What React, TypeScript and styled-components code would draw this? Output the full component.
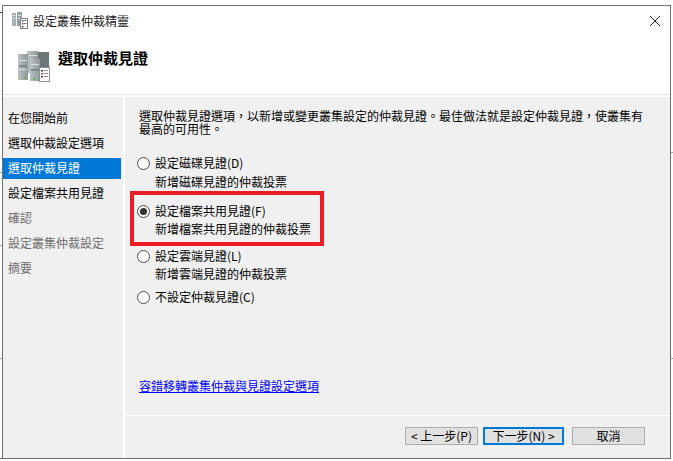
import React from "react";
import styled, { createGlobalStyle } from "styled-components";

const GlobalStyle = createGlobalStyle`
  html, body {
    margin: 0;
    padding: 0;
    background: #fff;
  }
  body {
    font-family: "Noto Sans CJK TC", "Noto Sans CJK SC", "Liberation Sans", sans-serif;
    font-size: 12px;
    color: #000;
    overflow: hidden;
  }
`;

const Page = styled.div`
  position: relative;
  width: 673px;
  height: 461px;
  padding: 5px 2px 0 2px;
  box-sizing: border-box;
`;

// bits of the desktop behind the dialog that show at the screenshot's edges
const EdgeTick = styled.i<{ $side: "left" | "right"; $y: number; $color?: string }>`
  position: absolute;
  ${(p) => p.$side}: 0;
  top: ${(p) => p.$y}px;
  width: 2px;
  height: 1px;
  background: ${(p) => p.$color || "#a0a0a0"};
`;

const Window = styled.div`
  width: 669px;
  height: 454px;
  box-sizing: border-box;
  border: 1px solid #707070;
  background: #fff;
  display: flex;
  flex-direction: column;
`;

const Header = styled.header`
  height: 88px;
  flex: none;
  border-bottom: 1px solid #e6e6e6;
  margin-bottom: 2px;
  box-sizing: content-box;
  display: flex;
  flex-direction: column;
`;

const TitleBar = styled.div`
  display: flex;
  align-items: center;
  height: 30px;
  padding: 0 9px 0 9px;
  gap: 5px;
`;

const TitleText = styled.span`
  flex: 1;
  font-size: 12px;
  line-height: 16px;
  color: #1a1a1a;
`;

const CloseButton = styled.button`
  width: 12px;
  height: 12px;
  padding: 0;
  border: 0;
  background: none;
  display: flex;
`;

const Banner = styled.div`
  display: flex;
  padding: 15px 0 0 14px;
  gap: 8px;
`;

const Heading = styled.h1`
  margin: -2px 0 0;
  font-size: 15px;
  line-height: 18px;
  font-weight: 700;
`;

const Body = styled.div`
  flex: 1;
  display: flex;
  min-height: 0;
  gap: 2px;
`;

const Sidebar = styled.nav`
  width: 120px;
  flex: none;
  background: #f0f0f0;
  box-sizing: border-box;
  padding: 11px 2px 0 0;
  display: flex;
  flex-direction: column;
  gap: 4px;
`;

const Step = styled.div<{ $state: "done" | "active" | "todo" }>`
  height: 21px;
  line-height: 20px;
  padding-left: 5px;
  white-space: nowrap;
  color: ${(p) => (p.$state === "active" ? "#fff" : p.$state === "todo" ? "#6d6d6d" : "#000")};
  background: ${(p) => (p.$state === "active" ? "#0078d7" : "transparent")};
`;

const Panel = styled.div`
  flex: 1;
  display: flex;
  flex-direction: column;
  min-width: 0;
  background: #f0f0f0;
`;

const Main = styled.main`
  position: relative;
  height: 318px;
  flex: none;
  box-sizing: border-box;
  padding: 12px 0 22px 14px;
  display: flex;
  flex-direction: column;
`;

const Intro = styled.p`
  margin: 0 0 19px;
  font-size: 12px;
  line-height: 13px;
  white-space: nowrap;
`;

const Option = styled.div<{ $top: number }>`
  margin-top: ${(p) => p.$top}px;
  margin-left: -2px;
`;

const OptionLabel = styled.label`
  display: flex;
  align-items: center;
  gap: 5px;
  height: 18px;
  line-height: 18px;
`;

const Radio = styled.span<{ $checked?: boolean }>`
  width: 13px;
  height: 13px;
  box-sizing: border-box;
  border: 1px solid #4a4a4a;
  border-radius: 50%;
  background: #fff;
  flex: none;
  display: flex;
  align-items: center;
  justify-content: center;
  &::after {
    content: "";
    width: 7px;
    height: 7px;
    border-radius: 50%;
    background: ${(p) => (p.$checked ? "#333" : "transparent")};
  }
`;

const OptionNote = styled.div<{ $top: number }>`
  margin: ${(p) => p.$top}px 0 0 18px;
  height: 18px;
  line-height: 18px;
  white-space: nowrap;
`;

const Highlight = styled.div`
  position: absolute;
  left: 5px;
  top: 94px;
  width: 194px;
  height: 55px;
  box-sizing: border-box;
  border: 4px solid #ed1c24;
  pointer-events: none;
`;

const HelpLink = styled.a`
  margin-top: auto;
  line-height: 14px;
  color: #0000ff;
  text-decoration: underline;
  white-space: nowrap;
`;

const Footer = styled.footer`
  flex: 1;
  border-top: 1px solid #fff;
  display: flex;
  justify-content: flex-end;
  padding: 11px 25px 0 0;
`;

const Button = styled.button<{ $primary?: boolean; $width: number; $left: number }>`
  width: ${(p) => p.$width}px;
  height: 18px;
  margin-left: ${(p) => p.$left}px;
  box-sizing: border-box;
  padding: 0;
  font-family: inherit;
  font-size: 12px;
  line-height: 14px;
  color: #000;
  background: #e1e1e1;
  border: ${(p) => (p.$primary ? "2px solid #0078d7" : "1px solid #adadad")};
`;

const steps: { label: string; state: "done" | "active" | "todo" }[] = [
  { label: "在您開始前", state: "done" },
  { label: "選取仲裁設定選項", state: "done" },
  { label: "選取仲裁見證", state: "active" },
  { label: "設定檔案共用見證", state: "done" },
  { label: "確認", state: "todo" },
  { label: "設定叢集仲裁設定", state: "todo" },
  { label: "摘要", state: "todo" },
];

const options = [
  { label: "設定磁碟見證(D)", note: "新增磁碟見證的仲裁投票", top: 0, noteTop: 1 },
  { label: "設定檔案共用見證(F)", note: "新增檔案共用見證的仲裁投票", top: 11, checked: true },
  { label: "設定雲端見證(L)", note: "新增雲端見證的仲裁投票", top: 9 },
  { label: "不設定仲裁見證(C)", top: 5 },
];

const SmallClusterIcon = () => (
  <svg width="16" height="18" viewBox="0 0 16 18">
    <rect x="0" y="1" width="4" height="13" fill="#a9b0b2" />
    <rect x="5" y="0" width="5" height="14" fill="#98a0a2" />
    <rect x="1" y="3" width="2" height="1" fill="#e6e9ea" />
    <rect x="1" y="6" width="2" height="1" fill="#e6e9ea" />
    <rect x="6" y="3" width="3" height="1" fill="#e6e9ea" />
    <rect x="6" y="6" width="3" height="1" fill="#e6e9ea" />
    <rect x="8.5" y="6.5" width="7" height="10" fill="#fff" stroke="#7d8486" />
    <rect x="10" y="8" width="1.5" height="1.5" fill="#444" />
    <rect x="12" y="8" width="2.5" height="1" fill="#777" />
    <rect x="10" y="11" width="1.5" height="1.5" fill="#c0392b" />
    <rect x="12" y="11" width="2.5" height="1" fill="#777" />
    <rect x="10" y="14" width="1.5" height="1.5" fill="#444" />
  </svg>
);

const ClusterIcon = () => (
  <svg width="33" height="31" viewBox="0 0 33 31">
    <defs>
      <linearGradient id="srv" x1="0" x2="1" y1="0" y2="0">
        <stop offset="0" stopColor="#bcc3c4" />
        <stop offset="1" stopColor="#8f9799" />
      </linearGradient>
    </defs>
    <rect x="10" y="0" width="11" height="22" fill="url(#srv)" />
    <rect x="21" y="1" width="11" height="22" fill="#6d7678" />
    <rect x="1" y="3" width="10" height="26" fill="url(#srv)" />
    <rect x="13" y="8" width="10" height="22" fill="url(#srv)" />
    <rect x="2" y="9" width="8" height="1" fill="#d9dddd" />
    <rect x="2" y="14" width="8" height="2" fill="#7f8789" />
    <rect x="2" y="18" width="8" height="1" fill="#d9dddd" />
    <rect x="14" y="13" width="8" height="1" fill="#d9dddd" />
    <rect x="14" y="18" width="8" height="2" fill="#7f8789" />
    <rect x="11" y="4" width="9" height="1" fill="#d9dddd" />
    <rect x="7" y="26" width="2" height="2" fill="#58b947" />
    <rect x="16" y="27" width="2" height="2" fill="#58b947" />
    <rect x="22.5" y="16.5" width="10" height="14" fill="#fff" stroke="#8d9496" />
    <rect x="24" y="19" width="2" height="1.5" fill="#444" />
    <rect x="27" y="19" width="4" height="1" fill="#8d9496" />
    <rect x="24" y="22" width="2" height="1.5" fill="#c0392b" />
    <rect x="27" y="22" width="4" height="1" fill="#8d9496" />
    <rect x="24" y="25" width="2" height="1.5" fill="#444" />
    <rect x="27" y="25" width="4" height="1" fill="#8d9496" />
  </svg>
);

const App = () => {
  return (
    <>
      <GlobalStyle />
      <Page>
        <EdgeTick $side="left" $y={12} $color="#1f4e9e" />
        <EdgeTick $side="left" $y={172} />
        <EdgeTick $side="left" $y={245} />
        <EdgeTick $side="left" $y={358} />
        <EdgeTick $side="left" $y={458} $color="#707070" />
        <EdgeTick $side="right" $y={152} />
        <EdgeTick $side="right" $y={358} />
        <Window>
          <Header>
            <TitleBar>
              <SmallClusterIcon />
              <TitleText>設定叢集仲裁精靈</TitleText>
              <CloseButton aria-label="關閉">
                <svg width="12" height="12" viewBox="0 0 12 12">
                  <path d="M1 1l10 10M11 1L1 11" stroke="#222" strokeWidth="1" fill="none" />
                </svg>
              </CloseButton>
            </TitleBar>
            <Banner>
              <ClusterIcon />
              <Heading>選取仲裁見證</Heading>
            </Banner>
          </Header>
          <Body>
            <Sidebar>
              {steps.map((step) => (
                <Step key={step.label} $state={step.state}>
                  {step.label}
                </Step>
              ))}
            </Sidebar>
            <Panel>
              <Main>
                <Intro>
                  選取仲裁見證選項，以新增或變更叢集設定的仲裁見證。最佳做法就是設定仲裁見證，使叢集有
                  <br />
                  最高的可用性。
                </Intro>
                {options.map((option) => (
                  <Option key={option.label} $top={option.top}>
                    <OptionLabel>
                      <Radio $checked={option.checked} />
                      {option.label}
                    </OptionLabel>
                    {option.note && <OptionNote $top={option.noteTop || 0}>{option.note}</OptionNote>}
                  </Option>
                ))}
                <Highlight />
                <HelpLink href="#">容錯移轉叢集仲裁與見證設定選項</HelpLink>
              </Main>
              <Footer>
                <Button $width={73} $left={0}>&lt; 上一步(P)</Button>
                <Button $primary $width={81} $left={5}>下一步(N) &gt;</Button>
                <Button $width={73} $left={8}>取消</Button>
              </Footer>
            </Panel>
          </Body>
        </Window>
      </Page>
    </>
  );
};

export default App;
